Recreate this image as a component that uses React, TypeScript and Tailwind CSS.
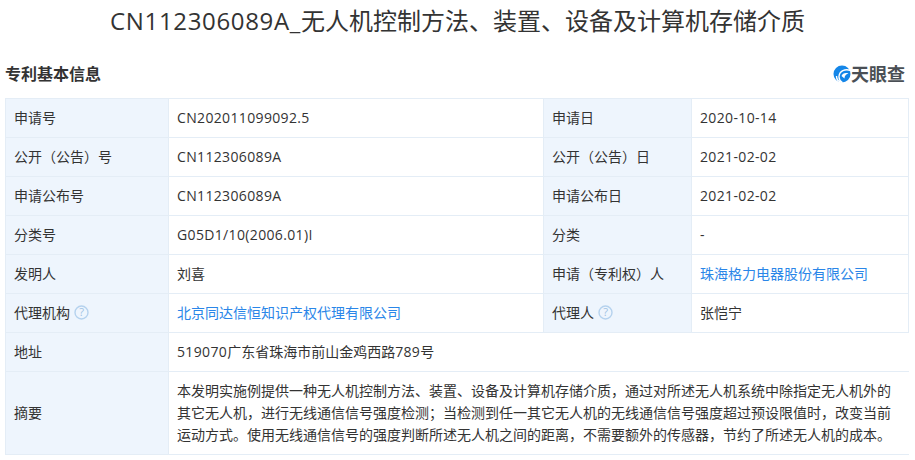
import { ReactNode } from 'react'

const FONT = "font-['Open_Sans','Noto_Sans_CJK_SC',sans-serif]"

function Help() {
  return (
    <svg width="15" height="15" viewBox="0 0 15 15" className="ml-[4px] shrink-0">
      <circle cx="7.5" cy="7.5" r="6.5" fill="none" stroke="#b5d2ee" strokeWidth="1.4" />
      <text x="7.5" y="11.4" textAnchor="middle" fontSize="11" fill="#9fc2e4">?</text>
    </svg>
  )
}

function Label({ children, help }: { children: ReactNode; help?: boolean }) {
  return (
    <div className="flex items-center bg-[#eef5fd] pl-[8px] pb-[2px] border-r border-b border-[#e4edf6]">
      {children}
      {help && <Help />}
    </div>
  )
}

function Value({ children, link, span }: { children: string | ReactNode; link?: boolean; span?: boolean }) {
  const latin = typeof children === 'string' && /^[\x00-\x7f]+$/.test(children)
  return (
    <div
      className={`flex items-center whitespace-pre pl-[8px] pb-[2px] border-b border-[#e4edf6] ${span ? 'col-span-3' : 'border-r'} ${link ? 'text-[#2a86e8]' : ''} ${latin ? 'tracking-[0.35px]' : ''}`}
    >
      {children}
    </div>
  )
}

const ROWS: [string, string, string, string][] = [
  ['申请号', 'CN202011099092.5', '申请日', '2020-10-14'],
  ['公开（公告）号', 'CN112306089A', '公开（公告）日', '2021-02-02'],
  ['申请公布号', 'CN112306089A', '申请公布日', '2021-02-02'],
  ['分类号', 'G05D1/10(2006.01)I', '分类', '-'],
  ['发明人', '刘喜', '申请（专利权）人', '珠海格力电器股份有限公司'],
  ['代理机构', '北京同达信恒知识产权代理有限公司', '代理人', '张恺宁'],
]

export default function App() {
  return (
    <div className={`w-[915px] h-[460px] overflow-hidden bg-white text-[#333] ${FONT}`}>
      <h1 className="h-[44px] text-center text-[24px] leading-[42px] font-normal text-[#333] whitespace-nowrap">
        <span className="tracking-[0.65px]">CN112306089A_</span>无人机控制方法、装置、设备及计算机存储介质
      </h1>
      <div className="flex items-center justify-between h-[54px] pl-[5px] pr-[9px]">
        <span className="text-[16px] font-semibold mt-[6px]">专利基本信息</span>
        <span className="flex items-center mt-[6px]">
          <svg width="18" height="18" viewBox="0 0 18 18">
            <circle cx="9" cy="9" r="8.5" fill="#1486e8" />
            <path d="M17.5 5.5 C12 3.5 6.5 6 6 11.5 C5.8 14 7 16 9.5 17.5 C5.5 17 3.5 14 3.5 11" fill="none" stroke="#fff" strokeWidth="1.4" />
            <path d="M8.5 11 C9.5 8.5 12 7.5 15.5 8.5 C12.5 9.5 11.5 11 11.5 13.5" fill="#fff" />
          </svg>
          <span className="text-[18px] leading-none font-semibold text-[#4a4f55] mr-[1px]">天眼查</span>
        </span>
      </div>
      <div className="ml-[5px] w-[904px] border-t border-l border-[#e4edf6] text-[14px] grid grid-cols-[163px_375px_148px_1fr] grid-rows-[repeat(7,39px)_83px]">
        {ROWS.map(([a, b, c, d]) => (
          <div key={a} className="contents">
            <Label help={a === '代理机构'}>{a}</Label>
            <Value link={a === '代理机构'}>{b}</Value>
            <Label help={c === '代理人'}>{c}</Label>
            <Value link={c === '申请（专利权）人'}>{d}</Value>
          </div>
        ))}
        <Label>地址</Label>
        <Value span>
          <span>
            <span className="tracking-[0.35px]">519070</span>广东省珠海市前山金鸡西路<span className="tracking-[0.35px]">789</span>号
          </span>
        </Value>
        <Label>摘要</Label>
        <div className="col-span-3 pl-[8px] pr-[10px] pt-[8px] leading-[22px] border-b border-[#e4edf6]">
          本发明实施例提供一种无人机控制方法、装置、设备及计算机存储介质，通过对所述无人机系统中除指定无人机外的其它无人机，进行无线通信信号强度检测；当检测到任一其它无人机的无线通信信号强度超过预设限值时，改变当前运动方式。使用无线通信信号的强度判断所述无人机之间的距离，不需要额外的传感器，节约了所述无人机的成本。
        </div>
      </div>
    </div>
  )
}
